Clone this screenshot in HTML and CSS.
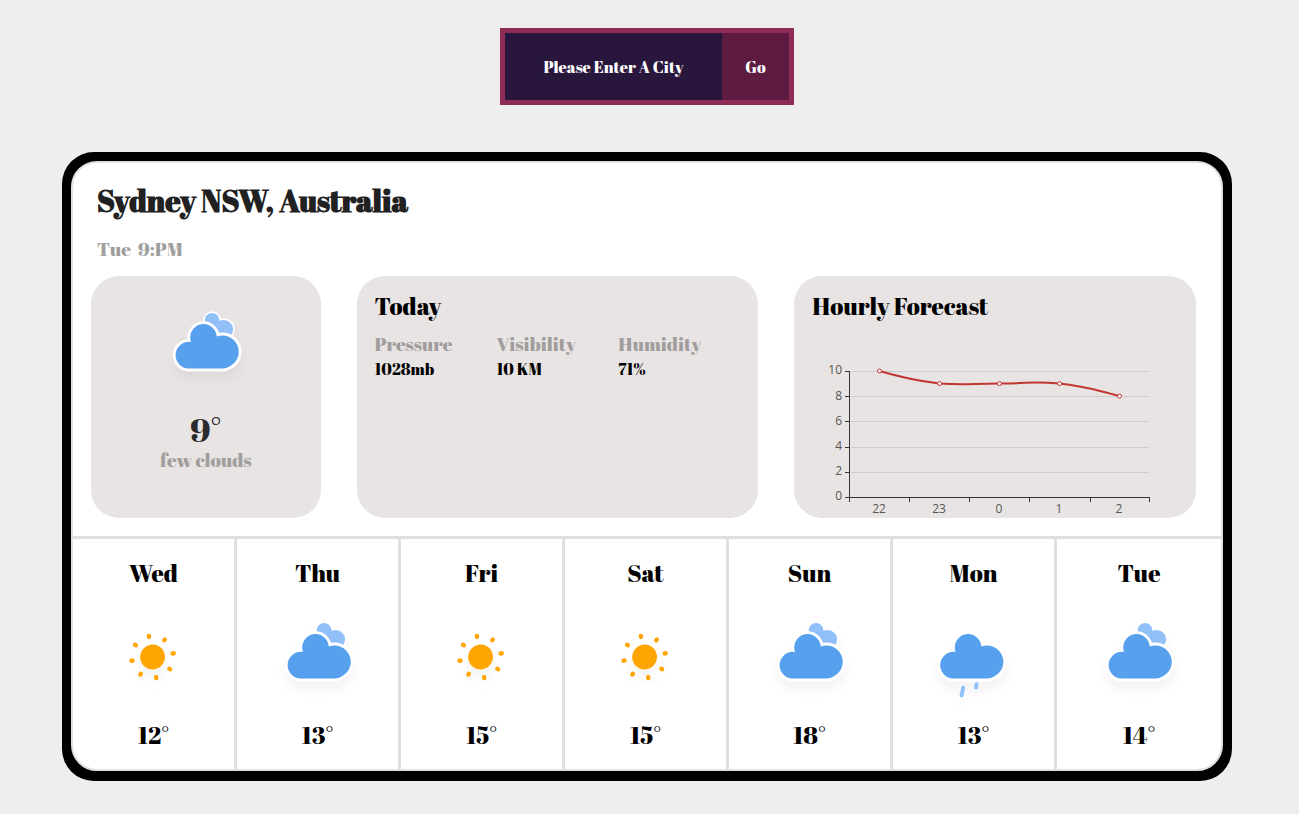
FILE: index.html
```html
<!DOCTYPE html>
<html lang="en">
<head>
<meta charset="utf-8">
<meta name="viewport" content="width=device-width, initial-scale=1">
<title>Weather</title>
<link rel="stylesheet" href="styles.css">
</head>
<body>
<svg class="defs" aria-hidden="true">
  <defs>
    <filter id="shadow" x="-50%" y="-50%" width="200%" height="200%">
      <feGaussianBlur in="SourceAlpha" stdDeviation="3"/>
      <feOffset dx="0" dy="4" result="offset"/>
      <feComponentTransfer><feFuncA type="linear" slope="0.05"/></feComponentTransfer>
      <feMerge><feMergeNode/><feMergeNode in="SourceGraphic"/></feMerge>
    </filter>
    <path id="cloud" d="M47.7,35.4c0-4.6-3.7-8.2-8.2-8.2c-1,0-1.9,0.2-2.8,0.5c-0.3-3.4-3.1-6.2-6.6-6.2c-3.7,0-6.7,3-6.7,6.7c0,0.8,0.2,1.6,0.4,2.3c-0.3-0.1-0.7-0.1-1-0.1c-3.7,0-6.7,3-6.7,6.7c0,3.6,2.9,6.6,6.5,6.7l17.2,0C44.2,43.3,47.7,39.8,47.7,35.4z"/>
    <line id="ray" y1="-10.2" y2="-10.7" stroke="orange" stroke-width="2.2" stroke-linecap="round"/>
    <symbol id="cloudy" viewBox="0 0 64 64">
      <g filter="url(#shadow)" stroke="#fff">
        <use href="#cloud" fill="#91c0f8" stroke-width="1.4" transform="translate(16.4 1.200) scale(.62)"/>
        <use href="#cloud" fill="#57a0ee" stroke-width="2.8" transform="translate(.7 -1)"/>
        <use href="#cloud" fill="#57a0ee" stroke="none" transform="translate(.7 -1)"/>
      </g>
    </symbol>
    <symbol id="rainy" viewBox="0 0 64 64">
      <g filter="url(#shadow)">
        <use href="#cloud" fill="#57a0ee" stroke="#fff" stroke-width="2.8" transform="translate(-1 -1)"/>
        <use href="#cloud" fill="#57a0ee" transform="translate(-1 -1)"/>
        <g stroke="#91c0f8" stroke-width="2" stroke-linecap="round">
          <path d="M26.6 47.3L25.8 51.2M33.3 45.6L33 47.3"/>
        </g>
      </g>
    </symbol>
    <symbol id="sunny" viewBox="0 0 64 64">
      <g filter="url(#shadow)">
        <g transform="translate(31.3 32) rotate(-10)">
          <circle r="6.2" fill="orange"/>
          <use href="#ray"/>
          <use href="#ray" transform="rotate(45)"/>
          <use href="#ray" transform="rotate(90)"/>
          <use href="#ray" transform="rotate(135)"/>
          <use href="#ray" transform="rotate(180)"/>
          <use href="#ray" transform="rotate(225)"/>
          <use href="#ray" transform="rotate(270)"/>
          <use href="#ray" transform="rotate(315)"/>
        </g>
      </g>
    </symbol>
  </defs>
</svg>

<form class="search">
  <input class="search-input" type="text" placeholder="Please Enter A City" aria-label="City">
  <button class="search-button" type="button">Go</button>
</form>

<main class="frame">
  <div class="weather">
    <section class="current">
      <h1 class="place">Sydney NSW, Australia</h1>
      <p class="time">Tue&nbsp; 9:PM</p>
      <div class="panels">
        <article class="panel now">
          <svg class="icon" role="img" aria-label="few clouds"><use href="#cloudy"/></svg>
          <div class="now-temp">9°</div>
          <div class="label">few clouds</div>
        </article>
        <article class="panel">
          <h2 class="panel-title">Today</h2>
          <dl class="stats">
            <div><dt class="label">Pressure</dt><dd class="value">1028mb</dd></div>
            <div><dt class="label">Visibility</dt><dd class="value">10 KM</dd></div>
            <div><dt class="label">Humidity</dt><dd class="value">71%</dd></div>
          </dl>
        </article>
        <article class="panel hourly">
          <h2 class="panel-title">Hourly Forecast</h2>
          <svg class="chart" viewBox="0 0 344 155" role="img" aria-label="Hourly temperatures">
            <path class="grid" d="M37 8.5H337M37 33.5H337M37 58.5H337M37 84.5H337M37 109.5H337"/>
            <path class="axis" d="M37.5 8V135M33 8.5H37M33 33.5H37M33 58.5H37M33 84.5H37M33 109.5H37M33 134.5H338M37.5 135V139M97.5 135V139M157.5 135V139M217.5 135V139M278.5 135V139M337.5 135V139"/>
            <g class="tick y">
              <text x="30" y="11">10</text><text x="30" y="37">8</text><text x="30" y="62">6</text>
              <text x="30" y="87">4</text><text x="30" y="112">2</text><text x="30" y="137">0</text>
            </g>
            <g class="tick x">
              <text x="67" y="150">22</text><text x="127" y="150">23</text><text x="187" y="150">0</text>
              <text x="247" y="150">1</text><text x="307" y="150">2</text>
            </g>
            <path class="series" d="M67.500 8C67.500 8 98 17 127.500 20.600C157 22.500 157.500 20.600 187.500 20.600C217.500 20.600 218 17.800 247.500 20.600C278 24 307.500 33.200 307.500 33.200"/>
            <g class="dots">
              <circle cx="67.500" cy="8" r="2"/><circle cx="127.500" cy="20.600" r="2"/><circle cx="187.500" cy="20.600" r="2"/>
              <circle cx="247.500" cy="20.600" r="2"/><circle cx="307.500" cy="33.200" r="2"/>
            </g>
          </svg>
        </article>
      </div>
    </section>
    <section class="week">
      <article class="day"><h3 class="day-name">Wed</h3><svg class="icon"><use href="#sunny"/></svg><div class="day-temp">12°</div></article>
      <article class="day"><h3 class="day-name">Thu</h3><svg class="icon"><use href="#cloudy"/></svg><div class="day-temp">13°</div></article>
      <article class="day"><h3 class="day-name">Fri</h3><svg class="icon"><use href="#sunny"/></svg><div class="day-temp">15°</div></article>
      <article class="day"><h3 class="day-name">Sat</h3><svg class="icon"><use href="#sunny"/></svg><div class="day-temp">15°</div></article>
      <article class="day"><h3 class="day-name">Sun</h3><svg class="icon"><use href="#cloudy"/></svg><div class="day-temp">18°</div></article>
      <article class="day"><h3 class="day-name">Mon</h3><svg class="icon"><use href="#rainy"/></svg><div class="day-temp">13°</div></article>
      <article class="day"><h3 class="day-name">Tue</h3><svg class="icon"><use href="#cloudy"/></svg><div class="day-temp">14°</div></article>
    </section>
  </div>
</main>
</body>
</html>
```
FILE: styles.css
```css
* { box-sizing: border-box; }
body {
  margin: 0;
  padding: 28px 67px 33px 62px;
  background: #eee;
  color: #000;
  font-family: "Abril Fatface", "Liberation Serif", serif;
  font-weight: 400;
}
h1, h2, h3, p, dl, dd { margin: 0; font-weight: inherit; }
.defs { position: absolute; width: 0; height: 0; }

.search {
  display: flex;
  width: 294px;
  margin: 0 auto 47px;
  border: 5px solid #8f2c56;
}
.search-input, .search-button {
  height: 67px;
  padding: 0;
  border: 0;
  border-radius: 0;
  color: #fff;
  font: inherit;
  font-size: 16px;
  text-align: center;
}
.search-input { flex: 1; min-width: 0; background: #29163d; }
.search-input::placeholder { color: #fff; opacity: 1; }
.search-button { width: 67px; background: #5e1b42; cursor: pointer; }

.frame { border: 9px solid #000; border-bottom-width: 10px; border-radius: 32px; background: #000; }
.weather {
  overflow: hidden;
  border: 2px solid #e0e0e0;
  border-radius: 26px;
  background: #fff;
}
.current { padding: 18px 25px 18px 18px; border-bottom: 3px solid #e0e0e0; }
.place { padding-left: 6px; color: #212121; font-size: 30px; font-weight: 700; line-height: 40px; }
.time { padding-left: 6px; margin: 15px 0 14px; color: #9e9e9e; font-size: 19px; line-height: 26px; }

.panels { display: grid; grid-template-columns: 4fr 7fr 7fr; gap: 36px; }
.panel { min-width: 0; min-height: 242px; padding: 16px 18px 0; border-radius: 28px; background: #e8e4e3; }
.panel-title { font-size: 24px; line-height: 28px; }
.now { display: flex; flex-direction: column; align-items: center; padding-top: 7px; }
.now-temp { color: #2b2b2b; font-size: 33px; line-height: 37px; }
.label { color: #a19d9c; font-size: 19px; line-height: 24px; }
.value { font-size: 16px; line-height: 26px; }
.stats { display: grid; grid-template-columns: repeat(3, 1fr); padding-top: 12px; }
.icon { display: block; width: 128px; height: 128px; }

.hourly { display: flex; flex-direction: column; }
.chart { width: 100%; max-width: 344px; height: auto; margin-top: auto; overflow: visible; }
.grid { fill: none; stroke: #ccc; }
.axis { fill: none; stroke: #333; }
.tick { fill: #555; font: 400 12px "Open Sans", sans-serif; }
.y { text-anchor: end; }
.x { text-anchor: middle; }
.series { fill: none; stroke: #c23531; stroke-width: 2; }
.dots { fill: #fff; stroke: #c23531; }

.week { display: grid; grid-template-columns: repeat(7, 1fr); }
.day {
  display: flex;
  flex-direction: column;
  align-items: center;
  padding: 20px 0;
  border-right: 3px solid #e0e0e0;
}
.day:last-child { border-right: 0; }
.day-name { margin-bottom: 6px; font-size: 24px; line-height: 28px; }
.day-temp { font-size: 24px; line-height: 28px; }
```
